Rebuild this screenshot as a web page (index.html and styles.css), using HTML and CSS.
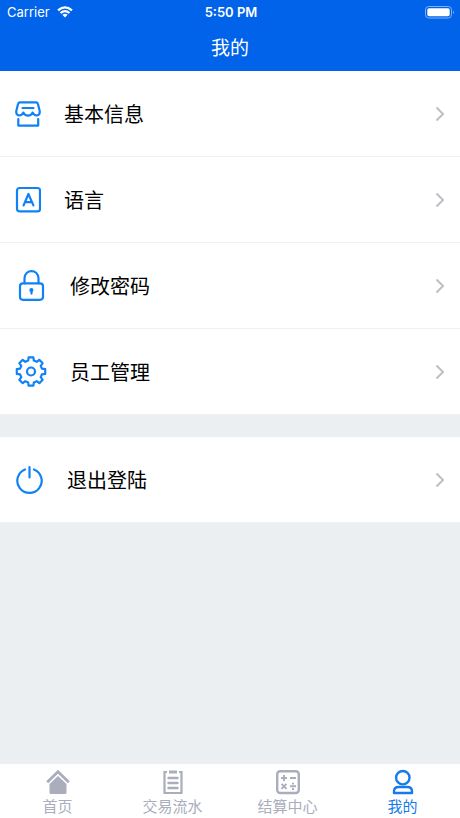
FILE: index.html
```html
<!DOCTYPE html>
<html lang="zh-CN">
<head>
<meta charset="utf-8">
<meta name="viewport" content="width=device-width, initial-scale=1">
<title>我的</title>
<link rel="stylesheet" href="styles.css">
</head>
<body>
<header class="header">
  <div class="status">
    <div class="carrier">
      <span>Carrier</span>
      <svg width="16" height="12" viewBox="0 0 16 12" fill="none" stroke="#fff" stroke-width="2.2"><path d="M1 4.3Q8-1.7 15 4.3M3.5 7Q8 3.2 12.5 7"/><path d="M5.4 8.7Q8 6.7 10.6 8.7L8 11.4Z" fill="#fff" stroke="none"/></svg>
    </div>
    <span class="time">5:50 PM</span>
    <svg class="battery" width="30" height="13" viewBox="0 0 30 13"><rect x=".5" y=".5" width="26" height="11.5" rx="3.2" fill="none" stroke="#80b1f5"/><rect x="2.3" y="2.3" width="22.4" height="8" rx="1.7" fill="#fff"/><path d="M28 4.4Q30 6.2 28 8Z" fill="#80b1f5"/></svg>
  </div>
  <h1 class="title">我的</h1>
</header>
<main class="content">
  <nav class="group" aria-label="设置">
    <a class="row" href="#profile">
      <svg class="icon" width="26" height="28" viewBox="0 0 26 28"><path d="M5.2 2.3H20.8Q22.6 2.3 22.9 3.8L24.8 11.5C24.8 16.6 19.6 16.6 17.6 12.6C15.8 16.6 10.2 16.6 8.4 12.6C6.4 16.6 1.2 16.6 1.2 11.5L3.1 3.8Q3.4 2.3 5.2 2.3Z"/><path d="M7.5 8H18.5M3.3 19V25.6H23.2V19"/></svg>
      <span class="label">基本信息</span>
      <svg class="chevron" viewBox="0 0 10 16"><path d="M1.5 1.5L8 8L1.5 14.5"/></svg>
    </a>
    <a class="row" href="#language">
      <svg class="icon" width="26" height="28" viewBox="0 0 26 28"><rect x="2" y="2" width="23" height="23.4" rx="2.5"/><path d="M8.6 19.4L13.4 8L18.4 19.4M10.2 16.2H16.8"/></svg>
      <span class="label">语言</span>
      <svg class="chevron" viewBox="0 0 10 16"><path d="M1.5 1.5L8 8L1.5 14.5"/></svg>
    </a>
    <a class="row" href="#password">
      <svg class="icon" width="32" height="32" viewBox="0 0 32 32"><rect x="5" y="13.3" width="23" height="16.5" rx="3"/><path d="M9.5 13.3V8.3C9.5-1.2 23.5-1.2 23.5 8.3V13.3"/><circle cx="16.4" cy="20" r="1" fill="#0f82f6"/><path d="M16.5 20V23.6"/></svg>
      <span class="label">修改密码</span>
      <svg class="chevron" viewBox="0 0 10 16"><path d="M1.5 1.5L8 8L1.5 14.5"/></svg>
    </a>
    <a class="row" href="#staff">
      <svg class="icon" width="32" height="32" viewBox="-16 -15.5 32 32"><path d="M-2.8-10.9L-2.4-14.2H2.4L2.8-10.9L5.7-9.7L8.3-11.7L11.7-8.3L9.7-5.7L10.9-2.8L14.2-2.4V2.4L10.9 2.8L9.7 5.7L11.7 8.3L8.3 11.7L5.7 9.7L2.8 10.9L2.4 14.2H-2.4L-2.8 10.9L-5.7 9.7L-8.3 11.7L-11.7 8.3L-9.7 5.7L-10.9 2.8L-14.2 2.4V-2.4L-10.9-2.8L-9.7-5.7L-11.7-8.3L-8.3-11.7L-5.7-9.7Z"/><circle r="4"/></svg>
      <span class="label">员工管理</span>
      <svg class="chevron" viewBox="0 0 10 16"><path d="M1.5 1.5L8 8L1.5 14.5"/></svg>
    </a>
  </nav>
  <div class="group">
    <a class="row" href="#logout">
      <svg class="icon" width="29" height="30" viewBox="0 0 29 30"><path d="M10 4.4A12.2 12.2 0 1 0 19 4.4M14.5 2V12.5"/></svg>
      <span class="label">退出登陆</span>
      <svg class="chevron" viewBox="0 0 10 16"><path d="M1.5 1.5L8 8L1.5 14.5"/></svg>
    </a>
  </div>
</main>
<nav class="tabs" aria-label="主导航">
  <a class="tab" href="#home">
    <svg width="26" height="26" viewBox="0 0 26 26"><path d="M2.2 13.2L13 2.7L23.8 13.2" fill="none" stroke="#a9adbc" stroke-width="2.8"/><path d="M13 7L21.5 15V23.5Q21.5 25 20 25H6Q4.5 25 4.5 23.5V15Z" fill="#a9adbc"/></svg>
    <span>首页</span>
  </a>
  <a class="tab" href="#transactions">
    <svg width="26" height="26" viewBox="0 0 26 26" fill="none" stroke="#a9adbc" stroke-width="2.2"><path d="M7 3H4.5V24H21.5V3H19"/><path d="M9 3H17" stroke-width="3"/><path d="M8.5 9H17.5M8.5 14H17.5M8.5 19H17.5" stroke-width="2.4" stroke-linecap="round"/></svg>
    <span>交易流水</span>
  </a>
  <a class="tab" href="#settlement">
    <svg width="26" height="26" viewBox="0 0 26 26" fill="none" stroke="#a9adbc"><rect x="2.2" y="2.2" width="21.6" height="21.8" rx="3" stroke-width="2.4"/><path d="M6 9H12M9 6V12M15 9H21M6.5 14.8L11.5 19.8M11.5 14.8L6.5 19.8M15 17.3H21" stroke-width="1.9"/><path d="M18 13.7V15.5M18 19.1V20.9" stroke-width="2"/></svg>
    <span>结算中心</span>
  </a>
  <a class="tab active" href="#me" aria-current="page">
    <svg width="26" height="26" viewBox="0 0 26 26" fill="none" stroke="#167bea" stroke-width="2.4"><circle cx="12.8" cy="8.7" r="6.7"/><path d="M4 24V22.5Q4 18 8.5 18H17.5Q22 18 22 22.5V24Z" stroke-linejoin="round"/></svg>
    <span>我的</span>
  </a>
</nav>
</body>
</html>
```
FILE: styles.css
```css
* {
  box-sizing: border-box;
}

body {
  margin: 0;
  min-height: 100vh;
  display: flex;
  flex-direction: column;
  background: #ebeff2;
  color: #000;
  font-family: Inter, "Noto Sans CJK SC", sans-serif;
}

a {
  color: inherit;
  text-decoration: none;
}

svg {
  display: block;
  flex: none;
}

.header {
  background: #0063ea;
  color: #fff;
  padding-bottom: 5px;
}

.status {
  display: grid;
  grid-template-columns: 1fr auto 1fr;
  align-items: center;
  height: 24px;
  padding: 0 5px 0 7px;
  font-size: 13px;
}

.carrier {
  display: flex;
  align-items: center;
  gap: 7px;
}

.time {
  font-weight: 600;
}

.battery {
  justify-self: end;
}

.title {
  margin: 0;
  padding-top: 8px;
  font-size: 19px;
  line-height: 34px;
  font-weight: 400;
  text-align: center;
}

.content {
  flex: 1;
  display: flex;
  flex-direction: column;
  gap: 22px;
}

.group {
  background: #fff;
}

.row {
  display: flex;
  align-items: center;
  gap: 23px;
  height: 86px;
  padding: 0 15px;
  border-bottom: 1px solid #eff1f3;
}

.icon {
  fill: none;
  stroke: #0f82f6;
  stroke-width: 2.2;
  stroke-linecap: round;
  stroke-linejoin: round;
}

.label {
  flex: 1;
  padding-top: 2px;
  font-size: 20px;
  font-weight: 400;
  line-height: 30px;
}

.chevron {
  width: 10px;
  height: 16px;
  fill: none;
  stroke: #bcbfc5;
  stroke-width: 2;
}

.tabs {
  display: grid;
  grid-template-columns: repeat(4, 1fr);
  height: 54px;
  padding-top: 5px;
  background: #fff;
}

.tab {
  display: flex;
  flex-direction: column;
  align-items: center;
  color: #a9adbc;
  font-size: 15px;
  line-height: 24px;
}

.active {
  color: #167bea;
}
```
